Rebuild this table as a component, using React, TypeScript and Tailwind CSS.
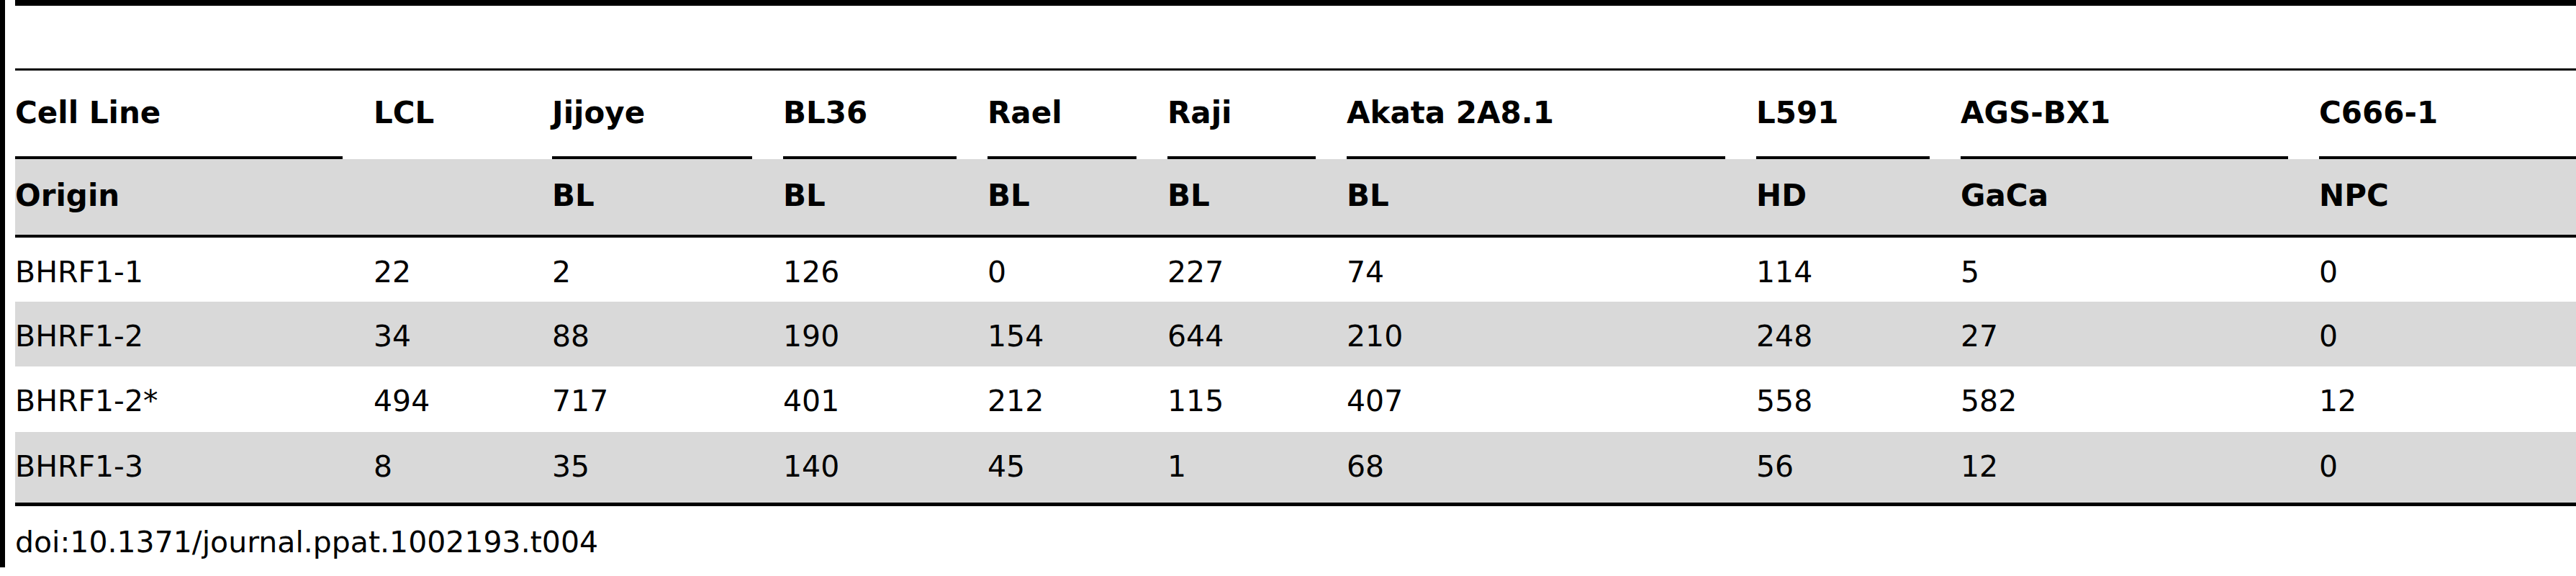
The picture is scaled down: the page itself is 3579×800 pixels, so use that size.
import React from "react";

const cols = "grid grid-cols-[498px_248px_321px_284px_250px_249px_569px_284px_498px_357px]";

const headers = ["Cell Line", "LCL", "Jijoye", "BL36", "Rael", "Raji", "Akata 2A8.1", "L591", "AGS-BX1", "C666-1"];
const origins = ["Origin", "", "BL", "BL", "BL", "BL", "BL", "HD", "GaCa", "NPC"];
const rows: { cells: string[]; gray: boolean; h: string }[] = [
  { cells: ["BHRF1-1", "22", "2", "126", "0", "227", "74", "114", "5", "0"], gray: false, h: "h-[89px]" },
  { cells: ["BHRF1-2", "34", "88", "190", "154", "644", "210", "248", "27", "0"], gray: true, h: "h-[90px]" },
  { cells: ["BHRF1-2*", "494", "717", "401", "212", "115", "407", "558", "582", "12"], gray: false, h: "h-[91px]" },
  { cells: ["BHRF1-3", "8", "35", "140", "45", "1", "68", "56", "12", "0"], gray: true, h: "h-[98px]" },
];

export default function App() {
  return (
    <div className="flex w-[3579px] h-[800px] bg-white text-black font-['DejaVu_Sans',sans-serif] text-[41px] leading-[48px]">
      <div className="w-[7px] h-[788px] bg-black shrink-0" />
      <div className="ml-[14px] flex flex-col w-[3558px] shrink-0">
        <div className="h-[8px] bg-black" />
        <div className="h-[87px]" />
        <div className="h-[3px] bg-black" />
        <div className={cols}>
          {headers.map((h, i) => (
            <div
              key={i}
              className={
                "h-[123px] pt-[35px] font-bold text-[42px] whitespace-nowrap " +
                (i === 1 ? "" : "border-b-4 border-black ") +
                (i === 9 ? "" : "mr-[43px]")
              }
            >
              {h}
            </div>
          ))}
        </div>
        <div className={cols + " bg-[#d9d9d9] h-[105px]"}>
          {origins.map((o, i) => (
            <div key={i} className="pt-[27px] font-bold text-[42px] whitespace-nowrap">
              {o}
            </div>
          ))}
        </div>
        <div className="h-[4px] bg-black" />
        {rows.map((r, ri) => (
          <div key={ri} className={cols + " " + r.h + (r.gray ? " bg-[#d9d9d9]" : " bg-white")}>
            {r.cells.map((c, ci) => (
              <div key={ci} className="pt-[24px] whitespace-nowrap">
                {c}
              </div>
            ))}
          </div>
        ))}
        <div className="h-[5px] bg-black" />
        <div className="mt-[26px] whitespace-nowrap">doi:10.1371/journal.ppat.1002193.t004</div>
      </div>
    </div>
  );
}
